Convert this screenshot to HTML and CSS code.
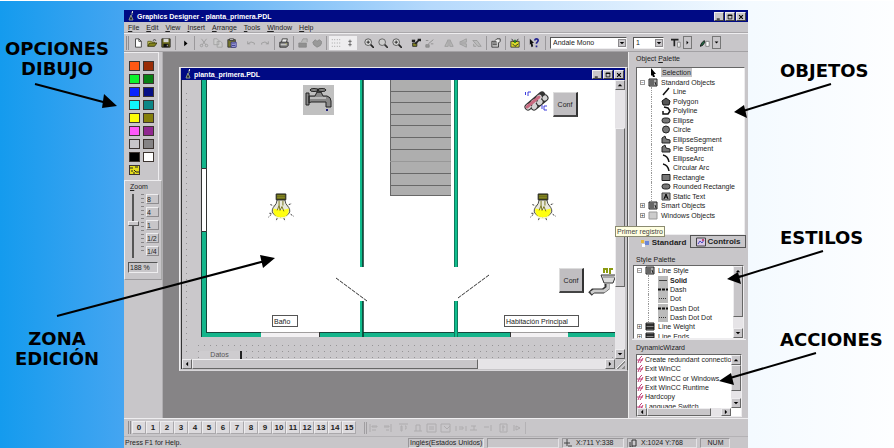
FILE: index.html
```html
<!DOCTYPE html>
<html lang="es">
<head>
<meta charset="utf-8">
<title>Graphics Designer</title>
<link rel="stylesheet" href="styles.css">
</head>
<body>
<svg class="defs" aria-hidden="true">
  <symbol id="new" viewBox="0 0 12 12"><path d="M3 1h4l3 3v7H3z" fill="#fff" stroke="#333"/><path d="M7 1v3h3" fill="none" stroke="#333"/></symbol>
  <symbol id="open" viewBox="0 0 12 12"><path d="M1 10V4h4l1 1h3v2" fill="#d8d860" stroke="#55551a"/><path d="M1 10l2-4h9l-3 4z" fill="#85851c" stroke="#33330c"/><path d="M7 3q2-2 4 0" fill="none" stroke="#222"/></symbol>
  <symbol id="save" viewBox="0 0 12 12"><path d="M1 1h10v10H1z" fill="#6c6c1c" stroke="#222"/><path d="M3 1h6v4H3z" fill="#d4d4d4"/><path d="M3 7h6v4H3z" fill="#111"/><path d="M7 8h1v2H7z" fill="#ddd"/></symbol>
  <symbol id="run" viewBox="0 0 12 12"><path d="M5 3l4 3.500-4 3.500z" fill="#000"/></symbol>
  <symbol id="cut" viewBox="0 0 12 12"><path d="M3 1l5 7M9 1L4 8" stroke="#999" fill="none"/><circle cx="3" cy="9" r="1.500" fill="none" stroke="#999"/><circle cx="9" cy="9" r="1.500" fill="none" stroke="#999"/></symbol>
  <symbol id="copy" viewBox="0 0 12 12"><path d="M1 1h4l2 2v5H1zM5 4h4l2 2v5H5z" fill="#ccc" stroke="#a0a0a0"/></symbol>
  <symbol id="paste" viewBox="0 0 12 12"><path d="M1 2h9v9H1z" fill="#77772c" stroke="#333"/><path d="M3 1h5v2H3z" fill="#ddd" stroke="#333"/><path d="M5 5h6v6H5z" fill="#bcbce8" stroke="#2c2c88"/><path d="M6 7h4M6 9h4" stroke="#2c2c88"/></symbol>
  <symbol id="undo" viewBox="0 0 12 12"><path d="M2 4v3h3M2 7q4-4 8-1v2" fill="none" stroke="#999"/></symbol>
  <symbol id="redo" viewBox="0 0 12 12"><path d="M10 4v3H7M10 7Q6 3 2 6v2" fill="none" stroke="#999"/></symbol>
  <symbol id="print" viewBox="0 0 12 12"><path d="M3 5l1-4h6L9 5" fill="#eee" stroke="#333"/><path d="M1 5h10v4l-2 2H1z" fill="#888" stroke="#222"/><path d="M2 8h7" stroke="#ddd"/><path d="M8 7h1" stroke="#cc3"/></symbol>
  <symbol id="lock" viewBox="0 0 12 12"><path d="M1 6h9v5H1z" fill="#909090" stroke="#888"/><path d="M4 5l2-4h5v4" fill="#bbb" stroke="#999"/></symbol>
  <symbol id="tag" viewBox="0 0 12 12"><path d="M1 5l3-3 2 2 3-2 3 3-2 4-4 2-4-3z" fill="#999" stroke="#888"/></symbol>
  <symbol id="grid" viewBox="0 0 12 12"><path d="M1 2h11M1 6h11M1 10h11" stroke="#888" stroke-dasharray="1 2"/></symbol>
  <symbol id="snap" viewBox="0 0 12 12"><path d="M6 2v8M4 4h4M4 8h4" stroke="#555"/></symbol>
  <symbol id="zin" viewBox="0 0 12 12"><circle cx="5" cy="5" r="4" fill="#ddd" stroke="#444"/><path d="M8 8l4 4" stroke="#222" stroke-width="2"/><path d="M3 5h4M5 3v4" stroke="#111"/></symbol>
  <symbol id="zout" viewBox="0 0 12 12"><circle cx="5" cy="5" r="4" fill="#ccc" stroke="#555"/><path d="M8 8l4 4" stroke="#333" stroke-width="2"/></symbol>
  <symbol id="copyprop" viewBox="0 0 12 12"><path d="M1 2h4v3H1z" fill="#222"/><path d="M2 6h5v4H2z" fill="#888822" stroke="#222"/><path d="M5 7l5-5M8 2h3v2" stroke="#222" stroke-width="2" fill="none"/></symbol>
  <symbol id="setprop" viewBox="0 0 12 12"><path d="M1 8h4v3H1zM4 7l6-5M1 3h3M7 7h3" fill="#999" stroke="#888"/></symbol>
  <symbol id="flip" viewBox="0 0 12 12"><path d="M5 2v8H1zM7 2v8h4z" fill="#bbb" stroke="#999"/></symbol>
  <symbol id="flipv" viewBox="0 0 12 12"><path d="M2 5h8V1zM2 7h8v4z" fill="#bbb" stroke="#999"/></symbol>
  <symbol id="rot" viewBox="0 0 12 12"><path d="M1 3h5l5 7H7zM2 7v3h3" fill="#bbb" stroke="#999"/></symbol>
  <symbol id="prop" viewBox="0 0 12 12"><path d="M1 4h8v7H1z" fill="#ccc" stroke="#333"/><path d="M2 6h5M2 8h5" stroke="#333"/><path d="M5 3l2-2h4v3L9 6" fill="#eee" stroke="#222"/></symbol>
  <symbol id="lib" viewBox="0 0 12 12"><path d="M1 4h10v7H1z" fill="#dada28" stroke="#333"/><path d="M2 1l3 4M10 1L7 5M3 7l3 3 4-3" stroke="#222" fill="none"/><path d="M5 2h2v4H5z" fill="#258025"/></symbol>
  <symbol id="what" viewBox="0 0 12 12"><path d="M1 1l5 5H4l1 4-2 1-1-4-1 1z" fill="#111"/><path d="M7 3q0-2 2-2t2 2q0 1-2 3v1M9 9v2" fill="none" stroke="#252590" stroke-width="2"/></symbol>
  <symbol id="tfont" viewBox="0 0 12 12"><path d="M0 2h9M4 2v8" stroke="#222" stroke-width="2"/><path d="M8 5h3v6H8z" fill="#fff" stroke="#777"/></symbol>
  <symbol id="brush" viewBox="0 0 12 12"><path d="M0 10l2-4 3-3 1 2-3 4z" fill="#226a44" stroke="#111"/><path d="M7 4h4v6H7z" fill="#fff" stroke="#777"/></symbol>
  <symbol id="appicon" viewBox="0 0 8 10"><path d="M5 1v3M4 4l2 5H2z" stroke="#8c9a8c" fill="#222"/><path d="M5 0h1v2H5z" fill="#ddd"/></symbol>
  <symbol id="up" viewBox="0 0 8 8"><path d="M1 5.500h6L4 2.500z"/></symbol>
  <symbol id="down" viewBox="0 0 8 8"><path d="M1 2.500h6L4 5.500z"/></symbol>
  <symbol id="left" viewBox="0 0 8 8"><path d="M5.500 1v6L2.500 4z"/></symbol>
  <symbol id="right" viewBox="0 0 8 8"><path d="M2.500 1v6L5.500 4z"/></symbol>
  <symbol id="min" viewBox="0 0 8 8"><path d="M1 6h4v1.500H1z"/></symbol>
  <symbol id="max" viewBox="0 0 8 8"><path d="M1.500 1.500h5v5h-5z" fill="none" stroke="#000"/><path d="M1 1h6v1.500H1z"/></symbol>
  <symbol id="close" viewBox="0 0 8 8"><path d="M1.500 1.500l5 5M6.500 1.500l-5 5" stroke="#000" stroke-width="1.500"/></symbol>
  <symbol id="tcur" viewBox="0 0 10 9"><path d="M3 0l5 6H6l1 3H5L4 7 3 8z" fill="#000"/></symbol>
  <symbol id="tbook" viewBox="0 0 10 9"><path d="M1 1h8v7H1z" fill="#aaa" stroke="#222"/><path d="M3 2v5M5 2v5M7 4l1 3" stroke="#222"/></symbol>
  <symbol id="tline" viewBox="0 0 10 9"><path d="M2 8l6-7" stroke="#111" stroke-width="1.500"/></symbol>
  <symbol id="tpoly" viewBox="0 0 10 9"><path d="M1 4l4-3 4 3-1 4H2z" fill="#555" stroke="#111"/></symbol>
  <symbol id="tpline" viewBox="0 0 10 9"><path d="M3 1l4 1 2 3-2 3H2V5" fill="none" stroke="#111" stroke-width="1.500"/></symbol>
  <symbol id="tell" viewBox="0 0 10 9"><rect x="1" y="2" width="8" height="5" rx="2.500" fill="#777" stroke="#222"/></symbol>
  <symbol id="tcirc" viewBox="0 0 10 9"><circle cx="5" cy="4.500" r="3.500" fill="#777" stroke="#222"/></symbol>
  <symbol id="tseg" viewBox="0 0 10 9"><path d="M1 8V3l3-2 1 3 4 1v3z" fill="#777" stroke="#222"/></symbol>
  <symbol id="tarc" viewBox="0 0 10 9"><path d="M2 1q5 1 6 7" fill="none" stroke="#111" stroke-width="1.500"/></symbol>
  <symbol id="trect" viewBox="0 0 10 9"><path d="M1 1.500h8v6H1z" fill="#777" stroke="#222"/></symbol>
  <symbol id="ttext" viewBox="0 0 10 9"><path d="M1 1h8v7H1z" fill="#999" stroke="#444"/><path d="M3 7l2-5 2 5M4 5h2" fill="none" stroke="#000"/></symbol>
  <symbol id="twin" viewBox="0 0 10 9"><path d="M1 1h8v7H1z" fill="#ccc" stroke="#999"/></symbol>
  <symbol id="ssolid" viewBox="0 0 10 9"><path d="M0 0h10v9H0z" fill="#bbb"/><path d="M1 4.500h8" stroke="#444"/></symbol>
  <symbol id="sdash" viewBox="0 0 10 9"><path d="M0 0h10v9H0z" fill="#bbb"/><path d="M0 4.500h10" stroke="#111" stroke-width="2" stroke-dasharray="3 1"/></symbol>
  <symbol id="sdot" viewBox="0 0 10 9"><path d="M0 0h10v9H0z" fill="#bbb"/><path d="M1 4.500h8" stroke="#333" stroke-dasharray="1 1"/></symbol>
  <symbol id="sweight" viewBox="0 0 10 9"><path d="M1 1h8v7H1z" fill="#888" stroke="#222"/><path d="M1 3h8M1 6h8" stroke="#111" stroke-width="1.500"/></symbol>
  <symbol id="wiz" viewBox="0 0 8 9"><path d="M1 8l2-5 2-2M3 8l3-5M0 5h6" fill="none" stroke="#c4407c"/></symbol>
  <symbol id="bulb" viewBox="0 0 28 30">
    <circle cx="14" cy="18" r="9" fill="#f4f4d0"/>
    <path d="M10 7q0 4-4 8-3 5 2 8t12 0q5-3 2-8-4-4-4-8z" fill="#e8e8dc" stroke="#444"/>
    <path d="M6 16q-1 9 8 9t8-9q-7 3-16 0z" fill="#ffff10"/>
    <path d="M10 18l2-5 1 5 2-4 2 5M12 8v5M16 8v5" fill="none" stroke="#77751c"/>
    <path d="M9 1h10v6H9z" fill="#55580e" stroke="#222"/><path d="M10 3h8M10 5h8" stroke="#a0a030"/>
    <path d="M4 22l-3 3M24 22l3 2M10 26l-1 3M17 26l1 3M2 21h2M22 12l3-1M3 12l3 1" stroke="#333" stroke-dasharray="2 1"/>
  </symbol>
</svg>

<main class="slide">
  <aside class="notes notes-left">
    <p class="note note-draw">OPCIONES<br>DIBUJO</p>
    <p class="note note-zone">ZONA<br>EDICIÓN</p>
  </aside>

  <section class="app">
    <header class="titlebar">
      <svg class="app-icon"><use href="#appicon"/></svg>
      <h1>Graphics Designer - planta_primera.PDL</h1>
      <button class="win" aria-label="Minimizar"><svg><use href="#min"/></svg></button>
      <button class="win" aria-label="Maximizar"><svg><use href="#max"/></svg></button>
      <button class="win" aria-label="Cerrar"><svg><use href="#close"/></svg></button>
    </header>
    <nav class="menu">
      <button><u>F</u>ile</button><button><u>E</u>dit</button><button><u>V</u>iew</button><button><u>I</u>nsert</button><button><u>A</u>rrange</button><button><u>T</u>ools</button><button><u>W</u>indow</button><button><u>H</u>elp</button>
    </nav>
    <div class="toolbar">
      <div class="group"><button aria-label="New"><svg><use href="#new"/></svg></button><button aria-label="Open"><svg><use href="#open"/></svg></button><button aria-label="Save"><svg><use href="#save"/></svg></button></div>
      <div class="group"><button aria-label="Runtime"><svg><use href="#run"/></svg></button></div>
      <div class="group"><button aria-label="Cut"><svg><use href="#cut"/></svg></button><button aria-label="Copy"><svg><use href="#copy"/></svg></button><button aria-label="Paste"><svg><use href="#paste"/></svg></button></div>
      <div class="group plain"><button aria-label="Undo"><svg><use href="#undo"/></svg></button><button aria-label="Redo"><svg><use href="#redo"/></svg></button></div>
      <div class="group"><button aria-label="Print"><svg><use href="#print"/></svg></button></div>
      <div class="group"><button aria-label="Forward"><svg><use href="#lock"/></svg></button><button aria-label="Backward"><svg><use href="#tag"/></svg></button></div>
      <div class="group"><button class="on" aria-label="Grid"><svg><use href="#grid"/></svg></button><button class="on" aria-label="Snap"><svg><use href="#snap"/></svg></button></div>
      <div class="group plain"><button aria-label="Zoom in"><svg><use href="#zin"/></svg></button><button aria-label="Zoom out"><svg><use href="#zout"/></svg></button><button aria-label="Zoom area"><svg><use href="#zin"/></svg></button></div>
      <div class="group plain"><button aria-label="Copy properties"><svg><use href="#copyprop"/></svg></button><button aria-label="Assign properties"><svg><use href="#setprop"/></svg></button></div>
      <div class="group plain"><button aria-label="Mirror"><svg><use href="#flip"/></svg></button><button aria-label="Mirror vertical"><svg><use href="#flipv"/></svg></button><button aria-label="Rotate"><svg><use href="#rot"/></svg></button></div>
      <div class="group"><button aria-label="Properties"><svg><use href="#prop"/></svg></button></div>
      <div class="group"><button aria-label="Library"><svg><use href="#lib"/></svg></button></div>
      <div class="group"><button aria-label="Context help"><svg><use href="#what"/></svg></button></div>
      <div class="fontbar">
        <div class="combo combo-font"><select aria-label="Font"><option>Andale Mono</option></select><svg><use href="#down"/></svg></div>
        <div class="combo combo-size"><select aria-label="Size"><option>1</option></select><svg><use href="#down"/></svg></div>
        <button aria-label="Font colour"><svg><use href="#tfont"/></svg></button><button class="drop" aria-label="More font colours"><svg><use href="#right"/></svg></button>
        <button aria-label="Fill colour"><svg><use href="#brush"/></svg></button><button class="drop" aria-label="More fill colours"><svg><use href="#down"/></svg></button>
      </div>
    </div>

    <div class="body">
      <div class="side">
        <div class="colors">
          <button class="c1" aria-label="Orange"></button><button class="c2" aria-label="Brown"></button>
          <button class="c3" aria-label="Lime"></button><button class="c4" aria-label="Green"></button>
          <button class="c5" aria-label="Blue"></button><button class="c6" aria-label="Navy"></button>
          <button class="c7" aria-label="Cyan"></button><button class="c8" aria-label="Teal"></button>
          <button class="c9" aria-label="Yellow"></button><button class="c10" aria-label="Olive"></button>
          <button class="c11" aria-label="Pink"></button><button class="c12" aria-label="Purple"></button>
          <button class="c13" aria-label="Silver"></button><button class="c14" aria-label="Gray"></button>
          <button class="c15" aria-label="Black"></button><button class="c16" aria-label="White"></button>
          <button class="c17" aria-label="More colours"><svg viewBox="0 0 9 8"><path d="M0 2h3M5 1h3M1 5h2M4 4l2 2h3M3 7h2" stroke="#222" fill="none"/></svg></button>
        </div>
        <div class="zoom">
          <label for="zoom"><u>Z</u>oom</label>
          <div class="zoom-row">
            <input id="zoom" type="range" min="0" max="100" value="54">
            <span class="ticks"></span>
            <div class="levels"><button>8</button><button>4</button><button>1</button><button>1/2</button><button>1/4</button></div>
          </div>
          <output for="zoom">188 %</output>
        </div>
      </div>

      <div class="work">
        <section class="doc">
          <header class="titlebar doc-title">
            <svg class="app-icon"><use href="#appicon"/></svg>
            <h2>planta_primera.PDL</h2>
            <button class="win" aria-label="Minimizar"><svg><use href="#min"/></svg></button>
            <button class="win" aria-label="Maximizar"><svg><use href="#max"/></svg></button>
            <button class="win" aria-label="Cerrar"><svg><use href="#close"/></svg></button>
          </header>
          <div class="view">
            <div class="canvas">
              <svg class="plan" viewBox="182 80 433 279" width="433" height="279">
                <defs><pattern id="dots" x="186" y="345" width="6" height="6" patternUnits="userSpaceOnUse"><path d="M0 0h1v1H0z" fill="#969496"/></pattern></defs>
                <path d="M182 80h433v279H182z" fill="#cac8cb"/>
                <path d="M186 90h5v262h-5zM198 343h417v16H198z" fill="url(#dots)"/>
                <path d="M206 80h409v252H206z" fill="#fff"/>
                <path d="M201 80h5v252h409v5H201z" fill="#14b58b"/>
                <path d="M206.500 80v252M206 332.500h409M201.500 80v257" stroke="#16463c" fill="none"/>
                <path d="M201.500 168.500h5v63h-5z" fill="#fff" stroke="#333"/>
                <path d="M261 332h59v5h-59zM510 332h58v5h-58z" fill="#f3f1f3"/>
                <path d="M261 332.500h59M510 332.500h58" stroke="#a09e9e"/>
                <path d="M319.500 332v5M510.500 332v5" stroke="#333"/>
                <path d="M360 80h3v187h-3zM360 301h3v36h-3zM454 80h4v187h-4zM454 301h4v36h-4z" fill="#10bd8d"/>
                <path d="M363 80v187M363 301v36" stroke="#0a3028" stroke-width="1.500"/>
                <path d="M454.500 80v187M454.500 301v36M457.500 80v187M457.500 301v36" stroke="#107a5e"/>
                <path d="M390 80h61v116h-61z" fill="#aeaeae"/>
                <path d="M390.500 80v116M390 91.500h61M390 102.500h61M390 114.500h61M390 125.500h61M390 137.500h61M390 149.500h61M390 173.500h61M390 185.500h61M390 195.500h61" stroke="#686868"/>
                <path d="M390 161.500h61" stroke="#989898"/>
                <path d="M336 278l31 23M489 275l-31 23" stroke="#333" stroke-dasharray="4 1"/>
                <path d="M303 85h31v30h-31z" fill="#c0c0c0"/>
                <g stroke="#222" fill="#888"><path d="M306 93h3v12h-3zM309 96h6l2-4h4l2 4h4q4 1 4 5v6h-5v-5h-15l-2 1zM317 89h4v3h-4z"/><ellipse cx="314" cy="90" rx="4" ry="1.500"/><ellipse cx="322" cy="90" rx="4" ry="1.500"/><path d="M310 98h16" stroke="#eee"/><path d="M327 109v2" stroke="#22227c" stroke-width="2"/></g>
                <use href="#bulb" x="267" y="193" width="28" height="29"/>
                <use href="#bulb" x="529" y="193" width="28" height="29"/>
                <g fill="none" stroke-linecap="round"><path d="M528 107l14-12M534 107l11-9" stroke="#333" stroke-width="7"/><path d="M528 107l14-12M534 107l11-9" stroke="#d4d4d4" stroke-width="5" stroke-dasharray="1 6"/><path d="M527 107l12-10" stroke="#c86a80" stroke-width="3"/><path d="M525.500 92v3M528 96v-4h3M542 105v4M547 106h-3v4h3" stroke="#3c3cdc" stroke-linecap="butt"/></g>
                <g stroke="#333"><path d="M601 275h15l-3 8h-9z" fill="#ddd"/><path d="M603 277h11" stroke="#777"/><path d="M607 284v4l-4 3h-10l-3 3" fill="none" stroke-width="5"/><path d="M608 284v4l-4 3h-10l-3 2" fill="none" stroke="#ccc" stroke-width="3"/><path d="M604 273v-4h3v4M610 274v-5h3" fill="none" stroke="#8a9a10" stroke-width="2"/></g>
              </svg>
              <button class="obj conf-a">Conf</button>
              <button class="obj conf-b">Conf</button>
              <span class="tag bath">Baño</span>
              <span class="tag room">Habitación Principal</span>
              <span class="slot">Datos</span>
            </div>
            <div class="vbar"><button aria-label="Arriba"><svg><use href="#up"/></svg></button><span class="thumb"></span><button class="end" aria-label="Abajo"><svg><use href="#down"/></svg></button></div>
            <div class="hbar"><button aria-label="Izquierda"><svg><use href="#left"/></svg></button><span class="thumb"></span><button class="end" aria-label="Derecha"><svg><use href="#right"/></svg></button></div>
            <span class="grip"></span>
          </div>
          <span class="tip" role="tooltip">Primer registro</span>
        </section>
      </div>

      <div class="panels">
        <section class="panel objects">
          <h3>Object <u>P</u>alette</h3>
          <div class="list">
            <ul class="tree">
              <li class="l1"><svg><use href="#tcur"/></svg><span class="sel">Selection</span></li>
              <li class="l0"><i>−</i><svg><use href="#tbook"/></svg>Standard Objects</li>
              <li class="l2"><svg><use href="#tline"/></svg>Line</li>
              <li class="l2"><svg><use href="#tpoly"/></svg>Polygon</li>
              <li class="l2"><svg><use href="#tpline"/></svg>Polyline</li>
              <li class="l2"><svg><use href="#tell"/></svg>Ellipse</li>
              <li class="l2"><svg><use href="#tcirc"/></svg>Circle</li>
              <li class="l2"><svg><use href="#tseg"/></svg>EllipseSegment</li>
              <li class="l2"><svg><use href="#tseg"/></svg>Pie Segment</li>
              <li class="l2"><svg><use href="#tarc"/></svg>EllipseArc</li>
              <li class="l2"><svg><use href="#tarc"/></svg>Circular Arc</li>
              <li class="l2"><svg><use href="#trect"/></svg>Rectangle</li>
              <li class="l2"><svg><use href="#tell"/></svg>Rounded Rectangle</li>
              <li class="l2"><svg><use href="#ttext"/></svg>Static Text</li>
              <li class="l0"><i>+</i><svg><use href="#tbook"/></svg>Smart Objects</li>
              <li class="l0"><i>+</i><svg><use href="#twin"/></svg>Windows Objects</li>
            </ul>
          </div>
          <div class="tabs">
            <button><svg viewBox="0 0 10 10"><path d="M1 2h3v3H1z" fill="#e8b83c"/><path d="M5 3h4v4H5z" fill="#6a86d8"/><path d="M2 6h3v3H2z" fill="#fff"/></svg>Standard</button>
            <button class="active"><svg viewBox="0 0 10 10"><path d="M.500 1h9v8h-9z" fill="#d8c8e4" stroke="#444"/><path d="M2 7l2-3 2 2 2-3" stroke="#4848c0" fill="none"/><path d="M6 2h2v2H6z" fill="#c04878"/></svg>Controls</button>
          </div>
        </section>
        <section class="panel styles">
          <h3>Style Palette</h3>
          <div class="list with-bar">
            <ul class="tree">
              <li class="l0"><i>−</i><svg><use href="#tbook"/></svg>Line Style</li>
              <li class="l2"><svg><use href="#ssolid"/></svg><b>Solid</b></li>
              <li class="l2"><svg><use href="#sdash"/></svg>Dash</li>
              <li class="l2"><svg><use href="#sdot"/></svg>Dot</li>
              <li class="l2"><svg><use href="#sdash"/></svg>Dash Dot</li>
              <li class="l2"><svg><use href="#sdot"/></svg>Dash Dot Dot</li>
              <li class="l0"><i>+</i><svg><use href="#sweight"/></svg>Line Weight</li>
              <li class="l0"><i>+</i><svg><use href="#sweight"/></svg>Line Ends</li>
            </ul>
            <div class="vbar"><button aria-label="Arriba"><svg><use href="#up"/></svg></button><span class="thumb"></span><button class="end" aria-label="Abajo"><svg><use href="#down"/></svg></button></div>
          </div>
        </section>
        <section class="panel wizard">
          <h3>DynamicWizard</h3>
          <div class="list with-bar">
            <ul class="tree">
              <li><svg><use href="#wiz"/></svg>Create redundant connection</li>
              <li><svg><use href="#wiz"/></svg>Exit WinCC</li>
              <li><svg><use href="#wiz"/></svg>Exit WinCC or Windows</li>
              <li><svg><use href="#wiz"/></svg>Exit WinCC Runtime</li>
              <li><svg><use href="#wiz"/></svg>Hardcopy</li>
              <li><svg><use href="#wiz"/></svg>Language Switch</li>
            </ul>
            <div class="vbar"><button aria-label="Arriba"><svg><use href="#up"/></svg></button><span class="thumb"></span><button class="end" aria-label="Abajo"><svg><use href="#down"/></svg></button></div>
            <div class="hbar"><button aria-label="Izquierda"><svg><use href="#left"/></svg></button><span class="thumb"></span><button class="end" aria-label="Derecha"><svg><use href="#right"/></svg></button></div>
          </div>
        </section>
      </div>
    </div>

    <div class="layers">
      <div class="numbers"><button>0</button><button>1</button><button>2</button><button>3</button><button>4</button><button>5</button><button>6</button><button>7</button><button>8</button><button>9</button><button>10</button><button>11</button><button>12</button><button>13</button><button>14</button><button>15</button></div>
      <div class="align">
        <svg viewBox="0 0 154 12" width="154" height="12" fill="none" stroke="#aeacae"><path d="M1 2v8M3 4h5v1H3zM3 8h4M22 2v8M15 4h5v1h-5M17 8h3M30 2h9M32 4h1v5h-1zM36 4h1v3h-1M45 9h8M47 3v6M51 3v6M47 3h4M58 2h9v8h-9zM60 5h5M60 7h5M72 2h9v8h-9zM75 4l3 3 3-3M87 4v5M90 5h4v2h-4M97 4v5M102 4h5M105 4v4M101 8h7M115 5h5M122 3v6M131 2h7v8h-7zM133 5h3M134 3v6M145 3v6M147 4l4 2-4 2z"/></svg>
      </div>
    </div>
    <footer class="status">
      <span class="msg">Press F1 for Help.</span>
      <span class="cell lang">Inglés(Estados Unidos)</span>
      <span class="cell blank"></span>
      <span class="cell pos"><svg viewBox="0 0 8 8"><path d="M3 0v7M0 4h6M4 7h4" stroke="#444" fill="none"/></svg>X:711 Y:338</span>
      <span class="cell size"><svg viewBox="0 0 8 8"><path d="M3 1h4v6H3zM1 3v5h3" stroke="#333" fill="none"/></svg>X:1024 Y:768</span>
      <span class="cell num">NUM</span>
    </footer>
  </section>

  <aside class="notes notes-right">
    <p class="note note-objects">OBJETOS</p>
    <p class="note note-styles">ESTILOS</p>
    <p class="note note-actions">ACCIONES</p>
  </aside>

  <svg class="arrows" viewBox="0 0 894 448" aria-hidden="true">
    <path d="M35 84l72 19M57 316l208-55M831 84l-88 27M823 251l-87 27M816 353l-86 25" fill="none" stroke="#000" stroke-width="2"/>
    <path d="M104 94l-2 14 15-2zM260 255l3 13 12-10zM744 105l3 13-13-6zM738 272l3 12-14-5zM731 373l3 12-15-4z"/>
  </svg>
</main>
</body>
</html>
```
FILE: styles.css
```css
* { box-sizing: border-box; }

:root {
  --face: #c8c6c9;
  --light: #eeedef;
  --dark: #858385;
  --navy: #000a84;
}

body {
  margin: 0;
  font: 7px/9px "Liberation Sans", Arial, sans-serif;
  color: #222;
}

h1, h2, h3, p, ul { margin: 0; padding: 0; font: inherit; }
ul { list-style: none; }
button, select, input { font: inherit; color: inherit; margin: 0; padding: 0; }
button { border: 0; background: none; }
svg { display: block; flex: none; }
.defs { position: absolute; width: 0; height: 0; }

.slide {
  position: relative;
  display: grid;
  grid-template-columns: 124px minmax(0, 1fr) 146px;
  min-height: 100vh;
  padding-top: 9px;
  border-top: 1px solid #fff;
  background: linear-gradient(90deg, #149bee 0%, #45a5f1 14%, #b5d9fc 48%, #f4faff 84%, #fdfeff 100%);
}

.arrows { position: absolute; top: -1px; left: 0; width: 100%; pointer-events: none; }

.note { font: bold 18px/20px "DejaVu Sans", Verdana, sans-serif; color: #000; }
.notes-left { padding: 29px 10px 0 0; text-align: center; }
.note-zone { margin-top: 250px; }
.notes-right { padding: 51px 0 0 32px; }
.note-styles { margin-top: 147px; }
.note-actions { margin-top: 82px; }

.app { display: flex; flex-direction: column; background: var(--face); }

.titlebar {
  display: flex;
  align-items: center;
  gap: 1px;
  height: 12px;
  padding: 0 2px 0 3px;
  background: var(--navy);
  color: #fff;
  font-weight: bold;
}
.titlebar h1, .titlebar h2 { flex: 1; padding-left: 1px; white-space: nowrap; }
.app-icon { width: 8px; height: 10px; }
.win {
  width: 10px;
  height: 9px;
  padding: 1px;
  background: var(--face);
  border: 1px solid;
  border-color: var(--light) #444 #444 var(--light);
}
.win svg { width: 6px; height: 6px; }

.menu { display: flex; gap: 7px; height: 11px; padding: 1px 4px; border-bottom: 1px solid #aaa8ab; }

.toolbar {
  display: flex;
  align-items: center;
  height: 19px;
  padding-left: 2px;
  border-top: 1px solid var(--light);
  border-bottom: 1px solid #a3a1a4;
}
.toolbar button { display: grid; place-items: center; width: 14px; height: 14px; }
.toolbar button svg { width: 10px; height: 10px; }
.group { display: flex; padding: 0 2px; border-left: 1px solid #9a989b; }
.group:first-child { border-left: 3px double #8f8d90; }
.group.plain { border-color: transparent; }
.toolbar .on { background: var(--light); }
.fontbar { display: flex; align-items: center; margin-left: 2px; padding-left: 4px; border-left: 1px solid #9a989b; }
.combo {
  display: flex;
  align-items: center;
  height: 12px;
  background: #fff;
  border: 1px solid;
  border-color: #555 var(--light) var(--light) #555;
}
.combo select { flex: 1; min-width: 0; padding-left: 2px; border: 0; background: none; appearance: none; }
.combo svg { width: 8px; height: 8px; background: var(--face); border: 1px solid #8b898c; }
.combo-font { width: 77px; }
.combo-size { width: 31px; margin: 0 5px 0 6px; }
.toolbar .drop { width: 9px; height: 13px; margin-right: 6px; border: 1px solid #777; }
.toolbar .drop svg { width: 5px; height: 5px; }

.body { flex: 1; display: flex; min-height: 0; }

.side { width: 39px; border-right: 1px solid #b0aeb1; }
.colors {
  display: grid;
  grid-template-columns: 11px 11px;
  grid-auto-rows: 10px;
  gap: 3px;
  width: 35px;
  height: 128px;
  padding: 8px 0 0 5px;
  border-top: 1px solid var(--light);
  border-right: 1px solid var(--light);
}
.colors button { border: 1px solid #3c3430; }
.c1 { background: #ff5814; } .c2 { background: #992c06; }
.c3 { background: #0cf42c; } .c4 { background: #078014; }
.c5 { background: #0a24ff; } .c6 { background: #060f84; }
.c7 { background: #10f4fa; } .c8 { background: #0c8686; }
.c9 { background: #fdfd08; } .c10 { background: #86800c; }
.c11 { background: #ff58fa; } .c12 { background: #902890; }
.c13 { background: #c8c6c9; } .c14 { background: #858385; }
.c15 { background: #000; } .c16 { background: #fff; }
.c17 { background: #e4dc1c; }
.c17 svg { width: 9px; height: 8px; }

.zoom {
  height: 100px;
  padding: 1px 2px 0 3px;
  border: 1px solid;
  border-color: var(--light) #aaa #9c9a9d var(--light);
}
.zoom label { display: block; padding-left: 2px; }
.zoom-row { display: flex; gap: 2px; height: 68px; padding-top: 3px; }
.zoom input {
  width: 11px;
  height: 64px;
  writing-mode: vertical-lr;
  direction: rtl;
  appearance: none;
  background: linear-gradient(90deg, transparent 4px, #555 4px, #555 6px, transparent 6px);
}
.zoom input::-webkit-slider-thumb {
  appearance: none;
  width: 11px;
  height: 5px;
  background: var(--face);
  border: 1px solid;
  border-color: var(--light) #555 #555 var(--light);
}
.ticks { width: 4px; height: 60px; background: repeating-linear-gradient(#858385 0 1px, transparent 1px 4px); }
.levels { display: grid; grid-template-rows: repeat(5, 10px); gap: 3px; }
.levels button {
  width: 13px;
  text-align: left;
  border: 1px solid;
  border-color: var(--light) #8d8b8e #8d8b8e var(--light);
}
.zoom output {
  display: block;
  width: 30px;
  margin-top: 3px;
  padding-left: 1px;
  border: 1px solid;
  border-color: #555 var(--light) var(--light) #555;
}

.work { flex: 1; min-width: 0; display: flex; padding: 15px 0 47px 16px; background: #868486; }
.doc {
  position: relative;
  flex: 1;
  min-width: 0;
  display: flex;
  flex-direction: column;
  padding: 0 2px 1px 1px;
  background: var(--face);
  border: 1px solid;
  border-color: var(--light) #555 #d8d6d9 var(--light);
}
.doc-title { padding-right: 1px; }
.view {
  flex: 1;
  display: grid;
  grid-template-columns: minmax(0, 1fr) 10px;
  grid-template-rows: minmax(0, 1fr) 10px;
  border-left: 1px solid #333;
}
.canvas { position: relative; overflow: hidden; background: var(--face); }
.obj {
  position: absolute;
  width: 25px;
  height: 25px;
  background: #c0bec1;
  border: 1px solid #ddd;
  border-right: 2px solid #333;
  border-bottom: 2px solid #444;
}
.conf-a { left: 371px; top: 12px; }
.conf-b { left: 377px; top: 188px; }
.tag { position: absolute; height: 12px; padding: 1px; background: #fff; border: 1px solid #555; white-space: nowrap; }
.bath { left: 90px; top: 235px; width: 26px; }
.room { left: 322px; top: 235px; width: 75px; }
.slot {
  position: absolute;
  left: 17px;
  top: 271px;
  width: 43px;
  height: 8px;
  line-height: 8px;
  text-align: center;
  color: #555;
  background: #cecccf;
  border-right: 2px solid #222;
}
.tip {
  position: absolute;
  left: 435px;
  top: 158px;
  z-index: 1;
  height: 11px;
  padding: 0 1px;
  white-space: nowrap;
  color: #444;
  background: #ffffe1;
  border: 1px solid #8b8b70;
}

.vbar, .hbar { display: flex; background: #e6e4e7; }
.vbar { flex-direction: column; }
.vbar button, .hbar button, .thumb {
  flex: none;
  display: grid;
  place-items: center;
  background: var(--face);
  border: 1px solid;
  border-color: var(--light) #666 #666 var(--light);
}
.vbar button { height: 10px; }
.hbar button { width: 10px; }
.vbar svg, .hbar svg { width: 6px; height: 6px; }
.vbar .end { margin-top: auto; }
.hbar .end { margin-left: auto; }
.view .vbar .thumb { height: 57%; margin-top: 38px; }
.view .hbar .thumb { width: 66%; }
.grip { background: linear-gradient(135deg, #c8c6c9 50%, #eee 50% 58%, #888 58% 66%, #c8c6c9 66% 80%, #888 80%); }

.panels {
  width: 120px;
  display: flex;
  flex-direction: column;
  padding: 2px 2px 0 3px;
  border-left: 1px solid #eee;
}
.panel h3 { height: 9px; padding-left: 4px; white-space: nowrap; }
.list { background: #fff; border: 1px solid; border-color: #666 var(--light) var(--light) #666; overflow: hidden; }
.objects { height: 199px; }
.objects .list { height: 168px; margin: 4px 1px 0 4px; }
.objects .tree { height: 152px; }
.tree { display: grid; grid-auto-rows: minmax(0, 1fr); overflow: hidden; background: #fff; }
.tree li { display: flex; align-items: center; gap: 3px; white-space: nowrap; }
.tree svg { width: 10px; height: 9px; }
.tree .l0 { padding-left: 3px; }
.tree .l1 { padding-left: 11px; }
.tree .l2 { margin-left: 14px; padding-left: 9px; gap: 2px; border-left: 1px dotted #999; }
.tree i {
  width: 5px;
  height: 5px;
  border: 1px solid #999;
  font: 5px/3px "Liberation Sans", sans-serif;
  text-align: center;
}
.sel { padding: 0 1px; background: #c4c2c5; }
.tabs { display: flex; height: 15px; margin-left: 4px; font: bold 8px/10px "Liberation Sans", sans-serif; }
.tabs button { flex: 1; display: flex; align-items: center; justify-content: center; gap: 2px; }
.tabs svg { width: 10px; height: 10px; }
.tabs .active { height: 13px; border: 1px solid #555; }

.with-bar { display: grid; grid-template-columns: minmax(0, 1fr) 10px; }
.styles { height: 86px; padding-top: 2px; }
.styles .list { height: 74px; margin: 1px 2px 0 1px; grid-template-rows: 72px; }
.styles .tree { height: 75px; }
.styles .thumb { height: 41px; }
.wizard { flex: 1; padding-top: 3px; border-top: 1px solid var(--light); }
.wizard .list { margin: 2px 4px 0; grid-template-rows: 53px 8px; }
.wizard .tree { height: 56px; }
.wizard .tree li { gap: 0; }
.wizard .tree svg { width: 8px; }
.wizard .vbar .thumb { height: 26px; }
.wizard .hbar { position: relative; }
.wizard .hbar .thumb { width: 64px; }

.layers {
  display: flex;
  align-items: center;
  height: 19px;
  padding-left: 4px;
  border-top: 1px solid var(--light);
  border-bottom: 1px solid #b4b2b5;
}
.numbers { display: flex; padding-left: 1px; border-left: 3px double #8f8d90; }
.numbers button {
  width: 14px;
  height: 13px;
  font-weight: bold;
  font-size: 8px;
  background: #dcdadd;
  border: 1px solid;
  border-color: var(--light) #aaa8ab #aaa8ab var(--light);
}
.align { margin-left: 8px; padding: 0 2px; border-left: 3px double #a09ea1; border-right: 1px solid #b4b2b5; }

.status { display: flex; align-items: center; height: 11px; padding: 0 18px 0 1px; gap: 3px; white-space: nowrap; }
.msg { flex: 1; }
.cell {
  display: flex;
  align-items: center;
  gap: 4px;
  height: 10px;
  padding-left: 1px;
  border: 1px solid;
  border-color: #99979a #e4e2e5 #e4e2e5 #99979a;
}
.cell svg { width: 8px; height: 8px; }
.lang { width: 76px; }
.blank { width: 72px; }
.pos { width: 62px; }
.size { width: 70px; }
.num { width: 30px; justify-content: center; }
```
